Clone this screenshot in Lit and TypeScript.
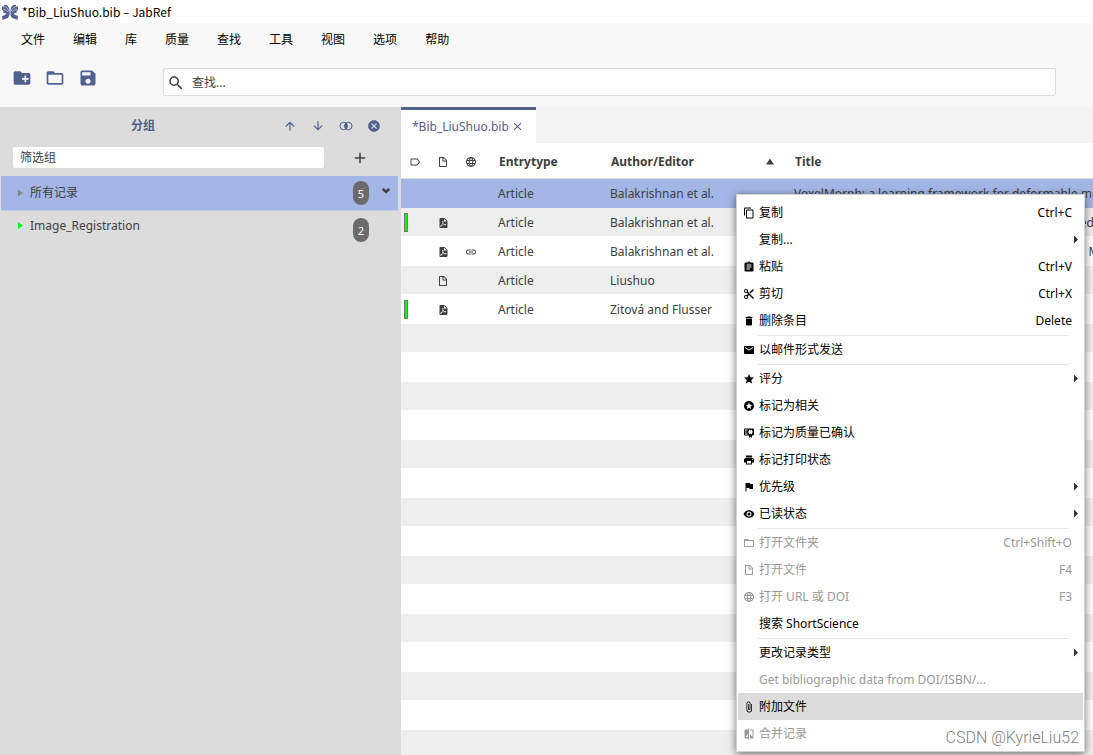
import { LitElement, html, css, svg, nothing } from "lit";
import { customElement, property, state } from "lit/decorators.js";

const ICONS: Record<string, unknown> = {
  folderPlus: svg`<path d="M4 20C2.9 20 2 19.11 2 18V6C2 4.89 2.89 4 4 4H10L12 6H20C21.1 6 22 6.89 22 8V18C22 19.11 21.1 20 20 20H4Z"/><path fill="#f8f8f8" d="M15 9H17V12H20V14H17V17H15V14H12V12H15Z"/>`,
  folder: svg`<path d="M20,18H4V8H20M20,6H12L10,4H4C2.89,4 2,4.89 2,6V18A2,2 0 0,0 4,20H20A2,2 0 0,0 22,18V8C22,6.89 21.1,6 20,6Z"/>`,
  save: svg`<path d="M15,9H5V5H15M12,19A3,3 0 0,1 9,16A3,3 0 0,1 12,13A3,3 0 0,1 15,16A3,3 0 0,1 12,19M17,3H5C3.89,3 3,3.9 3,5V19A2,2 0 0,0 5,21H19A2,2 0 0,0 21,19V7L17,3Z"/>`,
  search: svg`<path d="M9.5,3A6.5,6.5 0 0,1 16,9.5C16,11.11 15.41,12.59 14.44,13.73L14.71,14H15.5L20.5,19L19,20.5L14,15.5V14.71L13.73,14.44C12.59,15.41 11.11,16 9.5,16A6.5,6.5 0 0,1 3,9.5A6.5,6.5 0 0,1 9.5,3M9.5,5C7,5 5,7 5,9.5C5,12 7,14 9.5,14C12,14 14,12 14,9.5C14,7 12,5 9.5,5Z"/>`,
  up: svg`<path d="M13,20H11V8L5.5,13.5L4.08,12.08L12,4.16L19.92,12.08L18.5,13.5L13,8V20Z"/>`,
  down: svg`<path d="M11,4H13V16L18.5,10.5L19.92,11.92L12,19.84L4.08,11.92L5.5,10.5L11,16V4Z"/>`,
  intersect: svg`<circle cx="8" cy="12" r="6.4" fill="none" stroke="currentColor" stroke-width="1.7"/><circle cx="16" cy="12" r="6.4" fill="none" stroke="currentColor" stroke-width="1.7"/><path d="M12 7.4A6 6 0 0 1 12 16.6A6 6 0 0 1 12 7.4Z" stroke="currentColor" stroke-width="1"/>`,
  closeCircle: svg`<path d="M12,2C17.53,2 22,6.47 22,12C22,17.53 17.53,22 12,22C6.47,22 2,17.53 2,12C2,6.47 6.47,2 12,2M15.59,7L12,10.59L8.41,7L7,8.41L10.59,12L7,15.59L8.41,17L12,13.41L15.59,17L17,15.59L13.41,12L17,8.41L15.59,7Z"/>`,
  plus: svg`<path d="M19,13H13V19H11V13H5V11H11V5H13V11H19V13Z"/>`,
  close: svg`<path d="M19,6.41L17.59,5L12,10.59L6.41,5L5,6.41L10.59,12L5,17.59L6.41,19L12,13.41L17.59,19L19,17.59L13.41,12L19,6.41Z"/>`,
  chevron: svg`<path d="M3 7L7 5L12 10L17 5L21 7V10L12 18L3 10Z"/>`,
  label: svg`<path d="M16,17H5V7H16L19.55,12M17.63,5.84C17.27,5.33 16.67,5 16,5H5A2,2 0 0,0 3,7V17A2,2 0 0,0 5,19H16C16.67,19 17.27,18.66 17.63,18.15L22,12L17.63,5.84Z"/>`,
  file: svg`<path d="M13,9H18.5L13,3.5V9M6,2H14L20,8V20A2,2 0 0,1 18,22H6C4.89,22 4,21.1 4,20V4C4,2.89 4.89,2 6,2M11,4H6V20H11L18,20V11H11V4Z"/>`,
  web: svg`<path d="M16.36,14C16.44,13.34 16.5,12.68 16.5,12C16.5,11.32 16.44,10.66 16.36,10H19.74C19.9,10.64 20,11.31 20,12C20,12.69 19.9,13.36 19.74,14M14.59,19.56C15.19,18.45 15.65,17.25 15.97,16H18.92C17.96,17.65 16.43,18.93 14.59,19.56M14.34,14H9.66C9.56,13.34 9.5,12.68 9.5,12C9.5,11.32 9.56,10.65 9.66,10H14.34C14.43,10.65 14.5,11.32 14.5,12C14.5,12.68 14.43,13.34 14.34,14M12,19.96C11.17,18.76 10.5,17.43 10.09,16H13.91C13.5,17.43 12.83,18.76 12,19.96M8,8H5.08C6.03,6.34 7.57,5.06 9.4,4.44C8.8,5.55 8.35,6.75 8,8M5.08,16H8C8.35,17.25 8.8,18.45 9.4,19.56C7.57,18.93 6.03,17.65 5.08,16M4.26,14C4.1,13.36 4,12.69 4,12C4,11.31 4.1,10.64 4.26,10H7.64C7.56,10.66 7.5,11.32 7.5,12C7.5,12.68 7.56,13.34 7.64,14M12,4.03C12.83,5.23 13.5,6.57 13.91,8H10.09C10.5,6.57 11.17,5.23 12,4.03M18.92,8H15.97C15.65,6.75 15.19,5.55 14.59,4.44C16.43,5.07 17.96,6.34 18.92,8M12,2C6.47,2 2,6.5 2,12A10,10 0 0,0 12,22A10,10 0 0,0 22,12A10,10 0 0,0 12,2Z"/>`,
  pdf: svg`<path d="M14,9H19.5L14,3.5V9M7,2H15L21,8V20A2,2 0 0,1 19,22H7C5.89,22 5,21.1 5,20V4A2,2 0 0,1 7,2M11.93,12.44C12.34,13.34 12.86,14.08 13.46,14.59L13.87,14.91C13,15.07 11.8,15.35 10.53,15.84V15.84L10.42,15.88L10.92,14.84C11.37,13.97 11.7,13.18 11.93,12.44M18.41,16.25C18.59,16.07 18.68,15.84 18.69,15.59C18.72,15.39 18.67,15.2 18.57,15.04C18.28,14.57 17.53,14.35 16.29,14.35L15,14.42L14.13,13.84C13.5,13.32 12.93,12.41 12.53,11.28L12.57,11.14C12.9,9.81 13.21,8.2 12.55,7.54C12.39,7.38 12.17,7.3 11.94,7.3H11.7C11.33,7.3 11,7.69 10.91,8.07C10.54,9.4 10.76,10.13 11.13,11.34V11.35C10.88,12.23 10.56,13.25 10.05,14.28L9.09,16.08L8.2,16.57C7,17.32 6.43,18.16 6.32,18.69C6.28,18.88 6.3,19.05 6.37,19.23L6.4,19.28L6.88,19.59L7.32,19.7C8.13,19.7 9.05,18.75 10.29,16.63L10.47,16.56C11.5,16.23 12.78,16 14.5,15.81C15.53,16.32 16.74,16.55 17.5,16.55C17.94,16.55 18.24,16.44 18.41,16.25Z"/>`,
  link: svg`<path d="M3.9 12A3.1 3.1 0 0 1 7 8.9H11V7H7A5 5 0 0 0 7 17H11V15.1H7A3.1 3.1 0 0 1 3.9 12M8 13H16V11H8V13M17 7H13V8.9H17A3.1 3.1 0 0 1 17 15.1H13V17H17A5 5 0 0 0 17 7Z"/>`,
  copy: svg`<path d="M19,21H8V7H19M19,5H8A2,2 0 0,0 6,7V21A2,2 0 0,0 8,23H19A2,2 0 0,0 21,21V7A2,2 0 0,0 19,5M16,1H4A2,2 0 0,0 2,3V17H4V3H16V1Z"/>`,
  paste: svg`<path d="M17,9H7V7H17M17,13H7V11H17M14,17H7V15H14M12,3A1,1 0 0,1 13,4A1,1 0 0,1 12,5A1,1 0 0,1 11,4A1,1 0 0,1 12,3M19,3H14.82C14.4,1.84 13.3,1 12,1C10.7,1 9.6,1.84 9.18,3H5A2,2 0 0,0 3,5V19A2,2 0 0,0 5,21H19A2,2 0 0,0 21,19V5A2,2 0 0,0 19,3Z"/>`,
  cut: svg`<path d="M19,3L13,9L15,11L22,4V3M12,12.5A0.5,0.5 0 0,1 11.5,12A0.5,0.5 0 0,1 12,11.5A0.5,0.5 0 0,1 12.5,12A0.5,0.5 0 0,1 12,12.5M6,20A2,2 0 0,1 4,18C4,16.89 4.9,16 6,16A2,2 0 0,1 8,18C8,19.11 7.1,20 6,20M6,8A2,2 0 0,1 4,6C4,4.89 4.9,4 6,4A2,2 0 0,1 8,6C8,7.11 7.1,8 6,8M9.64,7.64C9.87,7.14 10,6.59 10,6A4,4 0 0,0 6,2A4,4 0 0,0 2,6A4,4 0 0,0 6,10C6.59,10 7.14,9.87 7.64,9.64L10,12L7.64,14.36C7.14,14.13 6.59,14 6,14A4,4 0 0,0 2,18A4,4 0 0,0 6,22A4,4 0 0,0 10,18C10,17.41 9.87,16.86 9.64,16.36L12,14L19,21H22V20L9.64,7.64Z"/>`,
  trash: svg`<path d="M19,4H15.5L14.5,3H9.5L8.5,4H5V6H19M6,19A2,2 0 0,0 8,21H16A2,2 0 0,0 18,19V7H6V19Z"/>`,
  mail: svg`<path d="M20,8L12,13L4,8V6L12,11L20,6M20,4H4C2.89,4 2,4.89 2,6V18A2,2 0 0,0 4,20H20A2,2 0 0,0 22,18V6C22,4.89 21.1,4 20,4Z"/>`,
  star: svg`<path d="M12,17.27L18.18,21L16.54,13.97L22,9.24L14.81,8.62L12,2L9.19,8.62L2,9.24L7.45,13.97L5.82,21L12,17.27Z"/>`,
  starCircle: svg`<path d="M16.23,18L12,15.45L7.77,18L8.89,13.19L5.16,9.96L10.08,9.54L12,5L13.92,9.53L18.84,9.95L15.11,13.18L16.23,18M12,2C6.47,2 2,6.5 2,12A10,10 0 0,0 12,22A10,10 0 0,0 22,12A10,10 0 0,0 12,2Z"/>`,
  certificate: svg`<path d="M4,3C2.89,3 2,3.89 2,5V15A2,2 0 0,0 4,17H12V22L15,19L18,22V17H20A2,2 0 0,0 22,15V8L22,6V5A2,2 0 0,0 20,3H16V3H4M12,5L15,7L18,5V8.5L21,10L18,11.5V15L15,13L12,15V11.5L9,10L12,8.5V5M4,5H9V7H4V5M4,9H7V11H4V9M4,13H9V15H4V13Z"/>`,
  print: svg`<path d="M18,3H6V7H18M19,12A1,1 0 0,1 18,11A1,1 0 0,1 19,10A1,1 0 0,1 20,11A1,1 0 0,1 19,12M16,19H8V14H16M19,8H5A3,3 0 0,0 2,11V17H6V21H18V17H22V11A3,3 0 0,0 19,8Z"/>`,
  flag: svg`<path d="M14.4,6L14,4H5V21H7V14H12.6L13,16H20V6H14.4Z"/>`,
  eye: svg`<path d="M12,9A3,3 0 0,0 9,12A3,3 0 0,0 12,15A3,3 0 0,0 15,12A3,3 0 0,0 12,9M12,17A5,5 0 0,1 7,12A5,5 0 0,1 12,7A5,5 0 0,1 17,12A5,5 0 0,1 12,17M12,4.5C7,4.5 2.73,7.61 1,12C2.73,16.39 7,19.5 12,19.5C17,19.5 21.27,16.39 23,12C21.27,7.61 17,4.5 12,4.5Z"/>`,
  clip: svg`<path d="M16.5,6V17.5A4,4 0 0,1 12.5,21.5A4,4 0 0,1 8.5,17.5V5A2.5,2.5 0 0,1 11,2.5A2.5,2.5 0 0,1 13.5,5V15.5A1,1 0 0,1 12.5,16.5A1,1 0 0,1 11.5,15.5V6H10V15.5A2.5,2.5 0 0,0 12.5,18A2.5,2.5 0 0,0 15,15.5V5A4,4 0 0,0 11,1A4,4 0 0,0 7,5V17.5A5.5,5.5 0 0,0 12.5,23A5.5,5.5 0 0,0 18,17.5V6H16.5Z"/>`,
  merge: svg`<path d="M19,3H14V5H19V18L14,12V21H19A2,2 0 0,0 21,19V5C21,3.89 20.1,3 19,3M10,18H5L10,12M10,3H5C3.89,3 3,3.89 3,5V19A2,2 0 0,0 5,21H10V23H12V1H10V3Z"/>`,
  logo: svg`<path d="M0 4L3 3L3 1L8 2Q11 5 11.300 10V16Q10 22 5 22L1 24L0 18L5 16L6 14L2 13V10L0 9Z"/><path d="M24 4L21 3L21 1L16 2Q13 5 12.700 10V16Q14 22 19 22L23 24L24 18L19 16L18 14L22 13V10L24 9Z"/><path d="M2 4Q8 4 10.500 11M22 4Q16 4 13.500 11M1.500 8Q6 8 9 12M22.500 8Q18 8 15 12" fill="none" stroke="#fff" stroke-width=".8"/>`,
};

@customElement("jr-icon")
class JrIcon extends LitElement {
  @property() name = "";
  static styles = css`
    :host { display: inline-flex; flex: none; width: 12px; height: 12px; }
    .glyph { width: 100%; height: 100%; fill: currentColor; display: block; }
  `;
  render() {
    return html`<svg class="glyph" viewBox="0 0 24 24" aria-hidden="true">${ICONS[this.name]}</svg>`;
  }
}

interface MenuItem {
  label: string;
  icon?: string;
  keys?: string;
  sub?: boolean;
  off?: boolean;
  active?: boolean;
}

const MENU: (MenuItem | null)[] = [
  { label: "复制", icon: "copy", keys: "Ctrl+C" },
  { label: "复制...", sub: true },
  { label: "粘贴", icon: "paste", keys: "Ctrl+V" },
  { label: "剪切", icon: "cut", keys: "Ctrl+X" },
  { label: "删除条目", icon: "trash", keys: "Delete" },
  null,
  { label: "以邮件形式发送", icon: "mail" },
  null,
  { label: "评分", icon: "star", sub: true },
  { label: "标记为相关", icon: "starCircle" },
  { label: "标记为质量已确认", icon: "certificate" },
  { label: "标记打印状态", icon: "print" },
  { label: "优先级", icon: "flag", sub: true },
  { label: "已读状态", icon: "eye", sub: true },
  null,
  { label: "打开文件夹", icon: "folder", keys: "Ctrl+Shift+O", off: true },
  { label: "打开文件", icon: "file", keys: "F4", off: true },
  { label: "打开 URL 或 DOI", icon: "web", keys: "F3", off: true },
  { label: "搜索 ShortScience" },
  null,
  { label: "更改记录类型", sub: true },
  { label: "Get bibliographic data from DOI/ISBN/...", off: true },
  { label: "附加文件", icon: "clip", active: true },
  { label: "合并记录", icon: "merge", off: true },
];

@customElement("jr-context-menu")
class JrContextMenu extends LitElement {
  static styles = css`
    :host { display: block; box-sizing: border-box; background: #fff; border: 1px solid #d4d4d4; padding: 4px 1px;
      box-shadow: 0 2px 8px rgba(0, 0, 0, 0.55); }
    .item { display: flex; align-items: center; width: 100%; height: 27px; padding: 0 5px; border: 0;
      background: none; color: #000; font: inherit; text-align: left; }
    .item:disabled { color: #999; }
    .active { background: #dcdcdc; }
    .slot { display: flex; width: 16px; padding-top: 1px; }
    .label { flex: 1; }
    .keys { padding-right: 6px; }
    .arrow { width: 4px; height: 8px; background: #333; clip-path: polygon(0 0, 100% 50%, 0 100%); }
    .rule { height: 1px; margin: 1px 15px 0 20px; border: 0; background: #e6e6e6; }
  `;
  render() {
    return html`${MENU.map((m) =>
      m === null
        ? html`<hr class="rule" />`
        : html`<button class="item ${m.active ? "active" : ""}" role="menuitem" ?disabled=${m.off}>
            <span class="slot">${m.icon ? html`<jr-icon name=${m.icon}></jr-icon>` : nothing}</span>
            <span class="label">${m.label}</span>
            ${m.keys ? html`<span class="keys">${m.keys}</span>` : nothing}
            ${m.sub ? html`<span class="arrow"></span>` : nothing}
          </button>`
    )}`;
  }
}

interface Entry {
  group?: boolean;
  file?: string;
  web?: boolean;
  author: string;
  title: string;
}

const ENTRIES: Entry[] = [
  { author: "Balakrishnan et al.", title: "VoxelMorph: a learning framework for deformable medical image registration" },
  { group: true, file: "pdf", author: "Balakrishnan et al.", title: "An unsupervised learning model for deformable medical image registration" },
  { file: "pdf", web: true, author: "Balakrishnan et al.", title: "VoxelMorph: A Learning Framework for Deformable Medical Image Registration" },
  { file: "file", author: "Liushuo", title: "Registration" },
  { group: true, file: "pdf", author: "Zitová and Flusser", title: "Image registration methods: a survey" },
];

@customElement("jr-entry-table")
class JrEntryTable extends LitElement {
  @state() private selected = 0;
  static styles = css`
    :host { display: block; overflow: hidden; color: #404040;
      background: repeating-linear-gradient(#fff 0 30px, #eee 30px 58px) 0 35px; }
    .table { width: 100%; table-layout: fixed; border-collapse: collapse; }
    .icon-col { width: 28px; }
    .type-col { width: 112px; }
    .author-col { width: 184px; }
    .head th { height: 33px; padding: 2px 0 0 14px; background: #fff; border-bottom: 1px solid #ddd; text-align: left; font-weight: 700; }
    .head .pic, .row .pic { padding-left: 0; text-align: center; }
    .pic jr-icon { display: flex; margin: 0 auto; }
    .sort { display: flex; align-items: center; justify-content: space-between; padding-right: 7px; }
    .up { width: 8px; height: 6px; background: #404040; clip-path: polygon(50% 0, 100% 100%, 0 100%); }
    .row td { height: 26px; padding: 2px 0 0 13px; background: #fff; border-bottom: 1px solid #fff; white-space: nowrap; overflow: hidden; }
    .row:nth-child(even) td { background: #eee; }
    .row.selected td { background: #a3b6e6; border-color: #a3b6e6; }
    .row .mark-cell { padding: 0 0 0 3px; height: 28px; }
    .mark { display: block; width: 4px; height: 19px; box-sizing: border-box; background: #0f0; border: 1px solid #777; }
  `;
  render() {
    return html`<table class="table">
      <colgroup>
        <col class="icon-col" /><col class="icon-col" /><col class="icon-col" /><col class="type-col" /><col class="author-col" /><col />
      </colgroup>
      <thead class="head">
        <tr>
          <th class="pic"><jr-icon name="label"></jr-icon></th>
          <th class="pic"><jr-icon name="file"></jr-icon></th>
          <th class="pic"><jr-icon name="web"></jr-icon></th>
          <th>Entrytype</th>
          <th><span class="sort">Author/Editor<span class="up"></span></span></th>
          <th>Title</th>
        </tr>
      </thead>
      <tbody>
        ${ENTRIES.map(
          (e, i) => html`<tr class="row ${i === this.selected ? "selected" : ""}" @click=${() => (this.selected = i)}>
            <td class="mark-cell">${e.group ? html`<span class="mark"></span>` : nothing}</td>
            <td class="pic">${e.file ? html`<jr-icon name=${e.file}></jr-icon>` : nothing}</td>
            <td class="pic">${e.web ? html`<jr-icon name="link"></jr-icon>` : nothing}</td>
            <td>Article</td>
            <td>${e.author}</td>
            <td>${e.title}</td>
          </tr>`
        )}
      </tbody>
    </table>`;
  }
}

@customElement("jr-groups")
class JrGroups extends LitElement {
  static styles = css`
    :host { display: block; background: #dcdcdc; color: #404040; }
    .bar { display: flex; align-items: center; height: 38px; padding-right: 19px; color: #50618f; }
    .name { flex: 1; margin: 0; padding-left: 4px; font: inherit; font-weight: 600; text-align: center; }
    .tools { display: flex; gap: 12px; }
    .tool { display: flex; padding: 1px; border: 0; background: none; color: inherit; }
    .tool jr-icon { width: 14px; height: 14px; }
    .filter { display: flex; align-items: center; height: 25px; padding: 0 31px 6px 13px; }
    .box { flex: 1; min-width: 0; height: 21px; box-sizing: border-box; padding: 0 7px; border: 0; border-radius: 2px; background: #fff; color: #404040; font: inherit; }
    .box::placeholder { color: #404040; opacity: 1; }
    .filter .tool { margin-left: 26px; }
    .filter .tool jr-icon { width: 18px; height: 18px; }
    .list { margin: 0 3px 0 1px; padding: 0; list-style: none; }
    .group { display: flex; align-items: center; height: 37px; padding-left: 17px; }
    .selected { height: 34px; background: #a3b6e6; border-bottom: 1px solid #c3cce4; color: #404040; }
    .fold { width: 5px; height: 7px; margin-right: 7px; background: #0f0; clip-path: polygon(0 0, 100% 50%, 0 100%); }
    .selected .fold { background: #888; }
    .label { flex: 1; }
    .group:not(.selected) .fold, .group:not(.selected) .label { margin-bottom: 8px; }
    .count { width: 16px; height: 23px; padding-top: 1px; border-radius: 8px; background: #6b6b6b; color: #fff; font-size: 11px; line-height: 23px; text-align: center; }
    .more { display: flex; width: 29px; padding-left: 12px; box-sizing: border-box; }
    .more jr-icon { width: 10px; height: 10px; margin-bottom: 5px; }
  `;
  render() {
    return html`
      <div class="bar">
        <h2 class="name">分组</h2>
        <div class="tools">
          ${[["up", "上移"], ["down", "下移"], ["intersect", "交集"], ["closeCircle", "关闭"]].map(
            ([icon, label]) => html`<button class="tool" aria-label=${label}><jr-icon name=${icon}></jr-icon></button>`
          )}
        </div>
      </div>
      <div class="filter">
        <input class="box" aria-label="筛选组" placeholder="筛选组" />
        <button class="tool" aria-label="添加"><jr-icon name="plus"></jr-icon></button>
      </div>
      <ul class="list">
        <li class="group selected">
          <span class="fold"></span><span class="label">所有记录</span><span class="count">5</span>
          <span class="more"><jr-icon name="chevron"></jr-icon></span>
        </li>
        <li class="group">
          <span class="fold"></span><span class="label">Image_Registration</span><span class="count">2</span>
          <span class="more"></span>
        </li>
      </ul>
    `;
  }
}

@customElement("app-root")
class AppRoot extends LitElement {
  static styles = css`
    :host { display: flex; flex-direction: column; position: relative; height: 100vh; overflow: hidden; background: #f8f8f8;
      font: 12px/18px "Noto Sans", "Noto Sans CJK SC", sans-serif; color: #000; }
    .title { display: flex; align-items: center; gap: 4px; height: 23px; padding-left: 2px; background: #fff; font-family: "Noto Sans CJK SC", sans-serif; }
    .title jr-icon { width: 16px; height: 16px; color: #50618f; }
    .menubar { display: flex; gap: 28px; height: 34px; padding: 0 21px; align-items: center; }
    .menu { padding: 0; border: 0; background: none; font: inherit; color: #000; }
    .toolbar { display: flex; align-items: center; height: 50px; padding: 0 37px 0 12px; }
    .tools { display: flex; gap: 13px; width: 151px; padding-bottom: 8px; }
    .tool { display: flex; padding: 0; border: 0; background: none; color: #50618f; }
    .tool jr-icon { width: 20px; height: 20px; }
    .search { display: flex; flex: 1; align-items: center; height: 28px; box-sizing: border-box; gap: 7px; padding: 1px 3px 0;
      border: 1px solid #ddd; border-radius: 2px; background: #fff; color: #404040; }
    .search jr-icon { width: 18px; height: 18px; }
    .query { flex: 1; min-width: 0; padding: 0; border: 0; outline: 0; background: none; font: inherit; color: inherit; }
    .query::placeholder { color: #404040; opacity: 1; }
    .body { display: grid; grid-template-columns: 401px minmax(0, 1fr); flex: 1; min-height: 0; }
    .main { display: flex; flex-direction: column; min-width: 0; background: #f3f3f3; }
    .tabs { display: flex; height: 36px; }
    .tab { display: flex; align-items: center; gap: 2px; padding: 0 12px 0 11px; border: 0; border-top: 3px solid #50618f; background: #fff; color: #50618f; font: inherit; }
    .tab jr-icon { width: 13px; height: 13px; }
    .table { flex: 1; min-height: 0; }
    .context { position: absolute; left: 736px; top: 194px; width: 349px; }
    .watermark { position: absolute; right: 14px; bottom: 7px; color: #808080; font: 300 16px/20px Roboto, sans-serif; }
  `;
  render() {
    return html`
      <header class="title"><jr-icon name="logo"></jr-icon><span>*Bib_LiuShuo.bib – JabRef</span></header>
      <nav class="menubar">
        ${["文件", "编辑", "库", "质量", "查找", "工具", "视图", "选项", "帮助"].map((m) => html`<button class="menu">${m}</button>`)}
      </nav>
      <div class="toolbar">
        <div class="tools">
          ${[["folderPlus", "新建"], ["folder", "打开"], ["save", "保存"]].map(
            ([icon, label]) => html`<button class="tool" aria-label=${label}><jr-icon name=${icon}></jr-icon></button>`
          )}
        </div>
        <label class="search"><jr-icon name="search"></jr-icon><input class="query" aria-label="查找" placeholder="查找..." /></label>
      </div>
      <div class="body">
        <jr-groups></jr-groups>
        <main class="main">
          <div class="tabs"><button class="tab">*Bib_LiuShuo.bib<jr-icon name="close"></jr-icon></button></div>
          <jr-entry-table class="table"></jr-entry-table>
        </main>
      </div>
      <jr-context-menu class="context" role="menu"></jr-context-menu>
      <span class="watermark">CSDN @KyrieLiu52</span>
    `;
  }
}
